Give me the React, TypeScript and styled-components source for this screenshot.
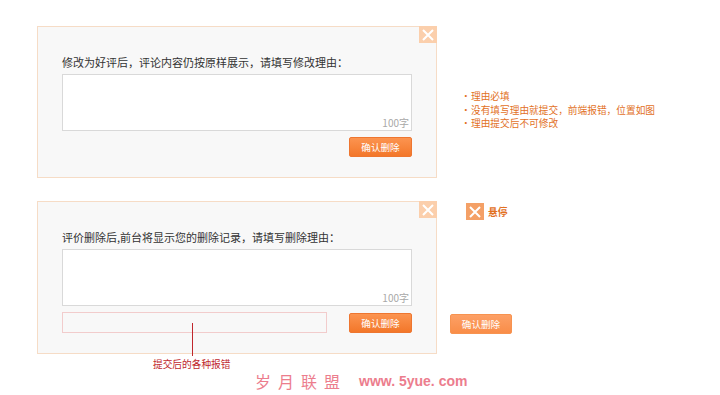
import styled, { createGlobalStyle } from "styled-components";

const GlobalStyle = createGlobalStyle`
  html, body {
    margin: 0;
    padding: 0;
    background: #ffffff;
  }
  body {
    font-family: "Noto Sans CJK SC", "Liberation Sans", sans-serif;
    color: #333333;
  }
`;

const Page = styled.div`
  width: 720px;
  height: 395px;
  padding: 26px 0 0 37px;
  box-sizing: border-box;
  overflow: hidden;
`;

const Row = styled.div<{ $gap: number }>`
  display: flex;
  align-items: stretch;
  gap: ${(p) => p.$gap}px;
`;

const Panel = styled.div`
  position: relative;
  width: 400px;
  box-sizing: border-box;
  background: #f8f8f8;
  border: 1px solid #f6dcc6;
  padding: 28px 24px 20px 24px;
`;

const CloseBox = styled.span<{ $hover?: boolean }>`
  display: inline-flex;
  align-items: center;
  justify-content: center;
  width: 18px;
  height: 17px;
  background: ${(p) => (p.$hover ? "#f4a066" : "#fbcfac")};
`;

const PanelClose = styled(CloseBox)`
  position: absolute;
  top: -1px;
  right: -1px;
`;

const Prompt = styled.div`
  font-size: 11px;
  line-height: 14px;
  color: #333333;
  margin-bottom: 5px;
  white-space: nowrap;
`;

const TextBox = styled.div`
  position: relative;
  height: 57px;
  box-sizing: border-box;
  background: #ffffff;
  border: 1px solid #d9d9d9;
`;

const Counter = styled.span`
  position: absolute;
  right: 2px;
  bottom: 1px;
  font-size: 10px;
  line-height: 12px;
  color: #a8a8a8;
`;

const Actions = styled.div`
  display: flex;
  align-items: center;
  justify-content: flex-end;
  gap: 22px;
  margin-top: 6px;
`;

const ErrorBox = styled.div`
  position: relative;
  flex: 1;
  height: 21px;
  box-sizing: border-box;
  border: 1px solid #f2cccc;
  background: #f8f8f8;
`;

const Pointer = styled.span`
  position: absolute;
  left: 129px;
  top: 10px;
  width: 1px;
  height: 33px;
  background: #c0272d;
`;

const Button = styled.button<{ $hover?: boolean }>`
  width: 63px;
  height: 20px;
  padding: 0;
  border: 1px solid ${(p) => (p.$hover ? "#f79350" : "#ee7630")};
  border-radius: 2px;
  background: ${(p) =>
    p.$hover
      ? "linear-gradient(#fda066, #f98d48)"
      : "linear-gradient(#fc9450, #f3772a)"};
  color: #ffffff;
  font-family: "Noto Sans CJK SC", sans-serif;
  font-size: 9.6px;
  line-height: 18px;
  cursor: pointer;
`;

const Notes = styled.ul`
  list-style: none;
  margin: 64px 0 0 0;
  padding: 0;
`;

const Note = styled.li`
  display: flex;
  gap: 7px;
  font-size: 9.7px;
  line-height: 13.5px;
  color: #e2711f;
  white-space: nowrap;

  &::before {
    content: "·";
    width: 3px;
  }
`;

const Side = styled.div`
  display: flex;
  flex-direction: column;
  padding: 2px 0 20px 0;
`;

const HoverDemo = styled.div`
  display: flex;
  align-items: center;
  gap: 4px;
  margin-left: 16px;
  font-size: 9.7px;
  font-weight: 700;
  color: #e2711f;
`;

const SideButton = styled(Button)`
  margin-top: auto;
  width: 62px;
`;

const Caption = styled.div`
  margin: 4px 0 0 116px;
  font-size: 9.7px;
  line-height: 13px;
  color: #c0272d;
`;

const Watermark = styled.div`
  display: flex;
  align-items: center;
  gap: 12px;
  margin: 1px 0 0 218px;
  color: #ec7d8d;
  line-height: 18px;
`;

const WaterCn = styled.span`
  font-size: 16px;
  letter-spacing: 7px;
  font-family: "Noto Sans CJK SC", sans-serif;
`;

const WaterEn = styled.span`
  font-size: 14px;
  font-weight: 700;
  font-family: "Liberation Sans", sans-serif;
`;

const Cross = () => (
  <svg width="12" height="12" viewBox="0 0 12 12">
    <path d="M1 1 L11 11 M11 1 L1 11" stroke="#ffffff" strokeWidth="2" />
  </svg>
);

export default function App() {
  return (
    <Page>
      <GlobalStyle />
      <Row $gap={24}>
        <Panel>
          <PanelClose>
            <Cross />
          </PanelClose>
          <Prompt>修改为好评后，评论内容仍按原样展示，请填写修改理由：</Prompt>
          <TextBox>
            <Counter>100字</Counter>
          </TextBox>
          <Actions>
            <Button>确认删除</Button>
          </Actions>
        </Panel>
        <Notes>
          <Note>理由必填</Note>
          <Note>没有填写理由就提交，前端报错，位置如图</Note>
          <Note>理由提交后不可修改</Note>
        </Notes>
      </Row>
      <Row $gap={13} style={{ marginTop: 23 }}>
        <Panel>
          <PanelClose>
            <Cross />
          </PanelClose>
          <Prompt>评价删除后,前台将显示您的删除记录，请填写删除理由：</Prompt>
          <TextBox>
            <Counter>100字</Counter>
          </TextBox>
          <Actions>
            <ErrorBox>
              <Pointer />
            </ErrorBox>
            <Button>确认删除</Button>
          </Actions>
        </Panel>
        <Side>
          <HoverDemo>
            <CloseBox $hover>
              <Cross />
            </CloseBox>
            悬停
          </HoverDemo>
          <SideButton $hover>确认删除</SideButton>
        </Side>
      </Row>
      <Caption>提交后的各种报错</Caption>
      <Watermark>
        <WaterCn>岁月联盟</WaterCn>
        <WaterEn>www. 5yue. com</WaterEn>
      </Watermark>
    </Page>
  );
}
